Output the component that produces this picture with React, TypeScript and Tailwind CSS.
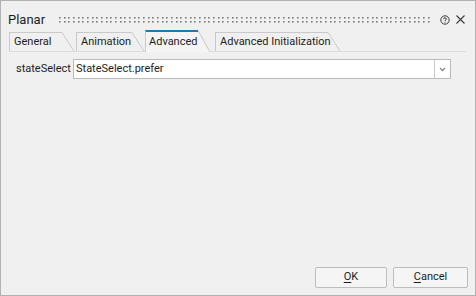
import React from "react";

const font = { fontFamily: "Roboto, 'Noto Sans', sans-serif" };

function GripDots() {
  return (
    <svg className="h-[8px] flex-1">
      <defs>
        <pattern id="grip" width="14" height="8" patternUnits="userSpaceOnUse">
          <rect x="0" y="1" width="1.6" height="1.6" fill="#7c7c7c" />
          <rect x="5" y="1" width="1.6" height="1.6" fill="#7c7c7c" />
          <rect x="9" y="1" width="1.6" height="1.6" fill="#7c7c7c" />
          <rect x="0" y="5" width="1.6" height="1.6" fill="#7c7c7c" />
          <rect x="5" y="5" width="1.6" height="1.6" fill="#7c7c7c" />
          <rect x="9" y="5" width="1.6" height="1.6" fill="#7c7c7c" />
        </pattern>
      </defs>
      <rect width="100%" height="8" fill="url(#grip)" />
    </svg>
  );
}

function Tab({ label, width, active = false, className = "" }: { label: string; width: number; active?: boolean; className?: string }) {
  return (
    <div className={`relative flex items-stretch ${active ? "-mb-px h-[22px] self-end" : "mt-[2px]"} ${className}`}>
      <div
        className={
          active
            ? "flex items-center whitespace-nowrap border-l border-t-2 border-l-[#c9c9c9] border-t-[#1d7bb0] bg-[#f4f4f4] pl-[3px] text-[11px] text-[#1e1e1e]"
            : "flex items-center whitespace-nowrap border-l border-t border-[#c9c9c9] pl-[4px] text-[11px] text-[#1e1e1e]"
        }
        style={{ width }}
      >
        {label}
      </div>
      <svg width="12" className="h-full shrink-0" viewBox="0 0 12 20" preserveAspectRatio="none">
        {active ? <polygon points="0,0 12,20 0,20" fill="#f4f4f4" /> : null}
        <line x1="0" y1="0.5" x2="12" y2="20" stroke="#c9c9c9" strokeWidth="1" />
      </svg>
    </div>
  );
}

export default function App() {
  return (
    <div className="flex h-[296px] w-[476px] flex-col border border-[#b2b2b2] bg-[#f0f0f0]" style={font}>
      <div className="mt-[8px] flex h-[21px] items-center pl-[7px] pr-[10px]">
        <span className="w-[51px] text-[13px] text-[#1e1e1e]">Planar</span>
        <GripDots />
        <svg width="10" height="10" viewBox="0 0 10 10" className="ml-[9px]">
          <circle cx="5" cy="5" r="4.2" fill="none" stroke="#3c3c3c" strokeWidth="1" />
          <path d="M3.6 3.9 C3.6 2.4 6.4 2.4 6.4 3.9 C6.4 4.9 5 4.9 5 6" fill="none" stroke="#3c3c3c" strokeWidth="1" />
          <rect x="4.5" y="6.8" width="1" height="1" fill="#3c3c3c" />
        </svg>
        <svg width="9" height="9" viewBox="0 0 9 9" className="ml-[6px]">
          <path d="M0.5 0.5 L8.5 8.5 M8.5 0.5 L0.5 8.5" stroke="#3c3c3c" strokeWidth="1.1" />
        </svg>
      </div>

      <div className="ml-[8px] mr-[9px] flex h-[22px] items-stretch border-b border-[#dcdcdc]">
        <Tab label="General" width={53} />
        <Tab label="Animation" width={56} className="ml-[2px]" />
        <Tab label="Advanced" width={53} active className="ml-[1px]" />
        <Tab label="Advanced Initialization" width={113} className="ml-[5px]" />
      </div>

      <div className="mt-[7px] flex items-center pl-[15px] pr-[24px]">
        <span className="w-[57px] text-[11px] text-[#1e1e1e]">stateSelect</span>
        <div className="flex h-[20px] flex-1 border border-[#b9b9b9] bg-white">
          <span className="flex flex-1 items-center pl-[2px] text-[11px] text-[#1e1e1e]">StateSelect.prefer</span>
          <div className="flex w-[16px] items-center justify-center border-l border-[#c8c8c8]">
            <svg width="7" height="5" viewBox="0 0 7 5">
              <path d="M1 1 L3.5 3.5 L6 1" fill="none" stroke="#8a8a8a" strokeWidth="1.3" />
            </svg>
          </div>
        </div>
      </div>

      <div className="flex-1" />

      <div className="flex justify-end gap-[6px] pb-[7px] pr-[7px]">
        <button className="h-[21px] w-[72px] rounded-[2px] border border-[#bdbdbd] bg-[#f5f5f5] text-[11px] text-[#1e1e1e]">
          <span className="underline underline-offset-2">O</span>K
        </button>
        <button className="h-[21px] w-[75px] rounded-[2px] border border-[#bdbdbd] bg-[#f5f5f5] text-[11px] text-[#1e1e1e]">
          <span className="underline underline-offset-2">C</span>ancel
        </button>
      </div>
    </div>
  );
}
